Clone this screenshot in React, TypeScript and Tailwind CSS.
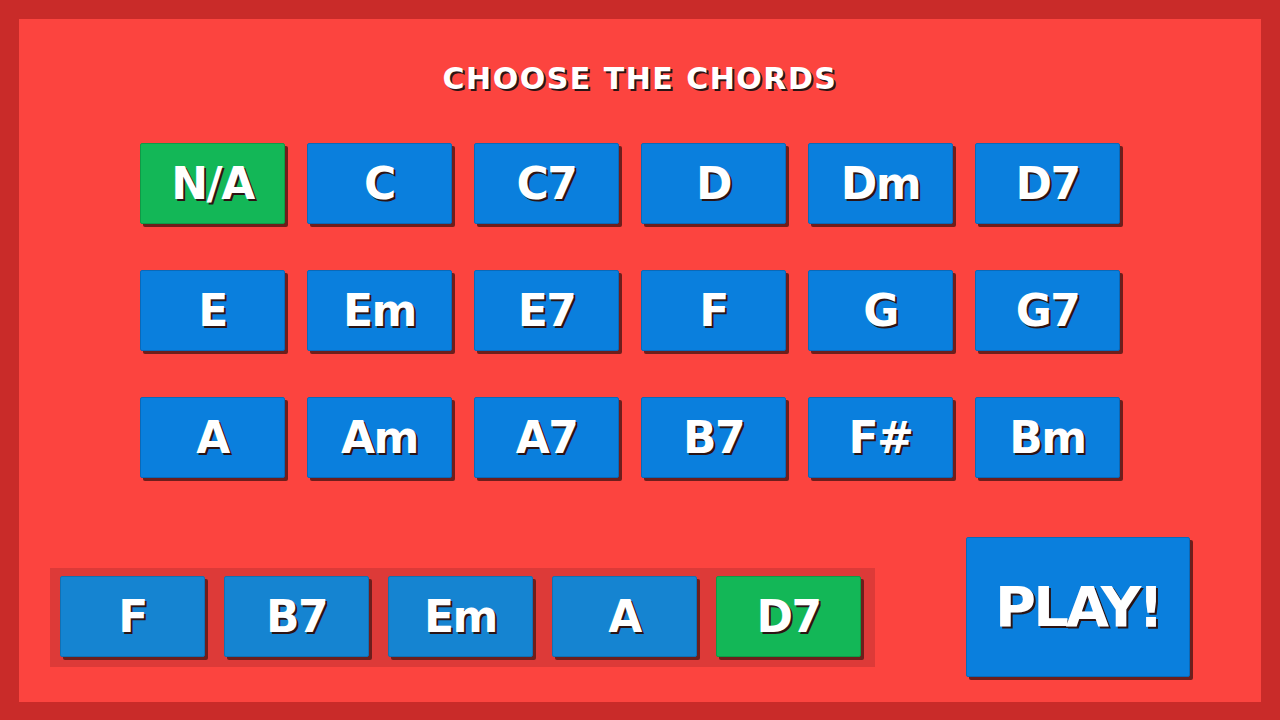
import React, { useState } from "react";

const CHORDS = [
	["N/A", "C", "C7", "D", "Dm", "D7"],
	["E", "Em", "E7", "F", "G", "G7"],
	["A", "Am", "A7", "B7", "F#", "Bm"],
];

const ChordBtn = ({
	label,
	active,
	tone,
	onClick,
}: {
	label: string;
	active: boolean;
	tone: "grid" | "bar";
	onClick?: () => void;
}) => (
	<button
		onClick={onClick}
		className={`flex h-[81px] w-[145px] items-center justify-center rounded-[2px] border shadow-[3px_3px_0_#6e1e1c] text-[44px] font-bold leading-none text-white [text-shadow:2px_2px_0_#2b1414] ${
			active
				? "border-[#0f9a47] bg-[#13b757]"
				: tone === "grid"
					? "border-[#0a69b8] bg-[#0a7fdd]"
					: "border-[#1270b3] bg-[#1584d1]"
		}`}
	>
		<span className="tracking-[-1.5px]">{label}</span>
	</button>
);

export default function App() {
	const [selected, setSelected] = useState("N/A");
	const progression = ["F", "B7", "Em", "A", "D7"];

	return (
		<div className="h-[720px] w-[1280px] bg-[#c92b29] px-[19px] pt-[19px] pb-[18px] font-['DejaVu_Sans',sans-serif]">
			<div className="flex h-full w-full flex-col bg-[#fc443f]">
				{/* Title */}
				<h1 className="mt-[45px] text-center text-[30px] font-bold leading-none tracking-[1.5px] text-white [text-shadow:2px_2px_0_#2b1414]">
					CHOOSE THE CHORDS
				</h1>

				{/* Chord grid */}
				<div className="mt-[49px] ml-[121px] flex flex-col gap-[46px]">
					{CHORDS.map((row, i) => (
						<div key={i} className="flex gap-[22px]">
							{row.map((c) => (
								<ChordBtn
									key={c}
									label={c}
									tone="grid"
									active={selected === c}
									onClick={() => setSelected(c)}
								/>
							))}
						</div>
					))}
				</div>

				{/* Bottom */}
				<div className="mt-[59px] flex items-start pl-[31px]">
					<div className="mt-[31px] flex gap-[19px] bg-[#dd3a38] pt-[8px] pr-[14px] pb-[10px] pl-[10px]">
						{progression.map((c, i) => (
							<ChordBtn
								key={i}
								label={c}
								tone="bar"
								active={i === progression.length - 1}
							/>
						))}
					</div>
					<button className="ml-[91px] flex h-[140px] w-[224px] items-center justify-center rounded-[2px] border border-[#0a69b8] bg-[#0a7fdd] shadow-[3px_3px_0_#6e1e1c] text-[56px] font-bold leading-none text-white [text-shadow:2px_2px_0_#2b1414]">
						<span className="tracking-[-3px]">PLAY!</span>
					</button>
				</div>
			</div>
		</div>
	);
}
